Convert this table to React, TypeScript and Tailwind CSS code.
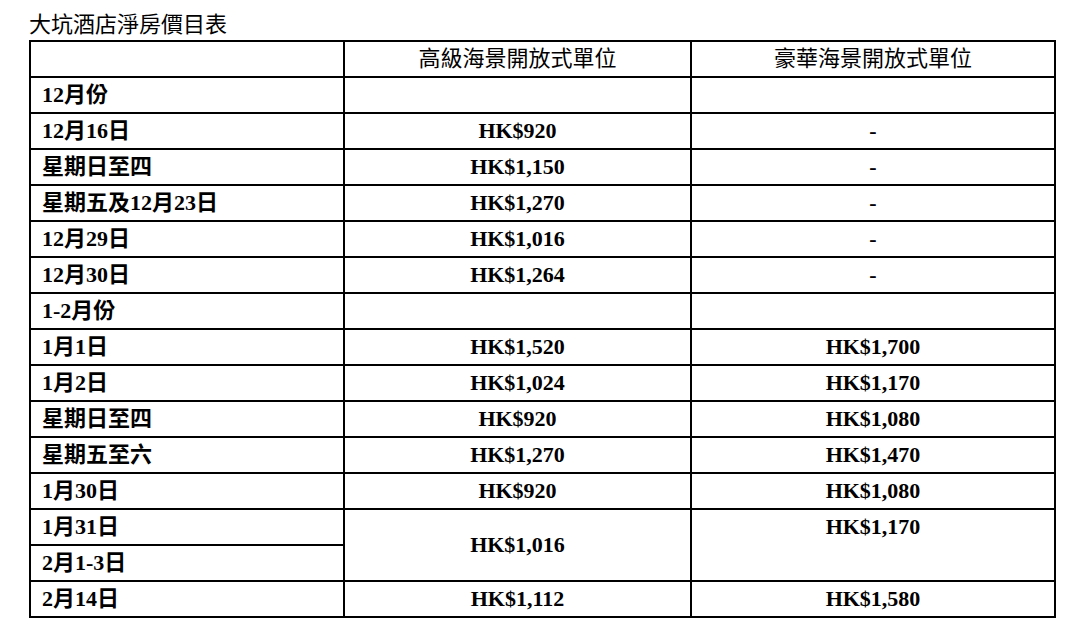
import React from "react";

const font = { fontFamily: '"Liberation Serif", "Noto Sans CJK TC", serif' };

type Row = { label: string; a: string; b: string };

const rowsTop: Row[] = [
  { label: "12月份", a: "", b: "" },
  { label: "12月16日", a: "HK$920", b: "-" },
  { label: "星期日至四", a: "HK$1,150", b: "-" },
  { label: "星期五及12月23日", a: "HK$1,270", b: "-" },
  { label: "12月29日", a: "HK$1,016", b: "-" },
  { label: "12月30日", a: "HK$1,264", b: "-" },
  { label: "1-2月份", a: "", b: "" },
  { label: "1月1日", a: "HK$1,520", b: "HK$1,700" },
  { label: "1月2日", a: "HK$1,024", b: "HK$1,170" },
  { label: "星期日至四", a: "HK$920", b: "HK$1,080" },
  { label: "星期五至六", a: "HK$1,270", b: "HK$1,470" },
  { label: "1月30日", a: "HK$920", b: "HK$1,080" },
];

const cell = "border-2 border-black h-[36px] p-0 leading-[30px] align-middle";

export default function App() {
  return (
    <div className="w-[1078px] h-[636px] bg-white text-black pl-[29px]" style={font}>
      <div className="pt-[12px] h-[40px] text-[22px] leading-[26px]">大坑酒店淨房價目表</div>
      <table className="border-collapse w-[1025px] table-fixed">
        <colgroup>
          <col className="w-[314px]" />
          <col className="w-[347px]" />
          <col className="w-[364px]" />
        </colgroup>
        <tbody>
          <tr>
            <td className={cell}></td>
            <td className={`${cell} text-center text-[22px]`}>高級海景開放式單位</td>
            <td className={`${cell} text-center text-[22px]`}>豪華海景開放式單位</td>
          </tr>
          {rowsTop.map((r, i) => (
            <tr key={i}>
              <td className={`${cell} pl-[11px] text-[22px] font-bold`}>{r.label}</td>
              <td className={`${cell} text-center text-[22px] font-bold`}>{r.a}</td>
              <td className={`${cell} text-center text-[22px] font-bold`}>{r.b}</td>
            </tr>
          ))}
          <tr>
            <td className={`${cell} pl-[11px] text-[22px] font-bold`}>1月31日</td>
            <td rowSpan={2} className={`${cell} text-center text-[22px] font-bold`}>HK$1,016</td>
            <td rowSpan={2} className={`${cell} text-center text-[22px] font-bold align-top`}>
              <div className="h-[33px] flex items-center justify-center">HK$1,170</div>
            </td>
          </tr>
          <tr>
            <td className={`${cell} pl-[11px] text-[22px] font-bold`}>2月1-3日</td>
          </tr>
          <tr>
            <td className={`${cell} pl-[11px] text-[22px] font-bold`}>2月14日</td>
            <td className={`${cell} text-center text-[22px] font-bold`}>HK$1,112</td>
            <td className={`${cell} text-center text-[22px] font-bold`}>HK$1,580</td>
          </tr>
        </tbody>
      </table>
    </div>
  );
}
